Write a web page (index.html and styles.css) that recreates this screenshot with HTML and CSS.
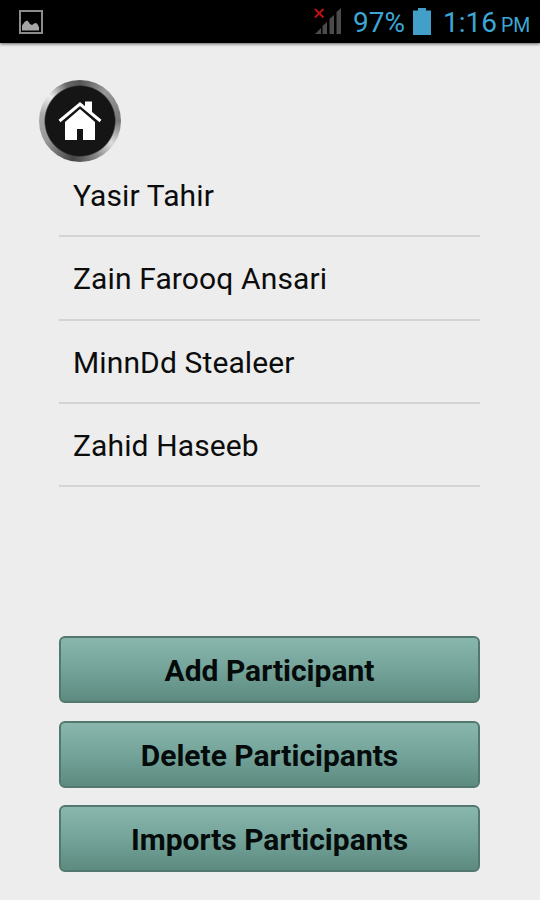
FILE: index.html
```html
<!DOCTYPE html>
<html lang="en">
<head>
    <meta charset="UTF-8">
    <meta name="viewport" content="width=device-width, initial-scale=1.0">
    <title>Participants</title>
    <link rel="stylesheet" href="styles.css">
</head>
<body>
    <div class="screen">
        <div class="status-bar">
            <svg class="icon-picture" width="24" height="25" viewBox="0 0 24 25">
                <rect x="1" y="1" width="22" height="22" fill="none" stroke="#8c8c8c" stroke-width="2"/>
                <path d="M3 20.500V15.500l3-4 2.500-1 2.500 3.500 2 1 3-2 2 .5 2 3.500v3.500z" fill="#a5a5a5"/>
            </svg>
            <svg class="icon-signal" width="29" height="28" viewBox="0 0 29 28">
                <path d="M1 27l6-6v6zM8.500 27v-8l4.500-4v12zM15.500 27V12l4.500-4v19zM22.500 27V5l4.500-4v26z" fill="#4b4b4b"/>
                <path d="M1 2l8.500 8.500M9.500 2L1 10.500" stroke="#c01010" stroke-width="2"/>
            </svg>
            <span class="battery-text">97%</span>
            <svg class="icon-battery" width="18" height="27" viewBox="0 0 18 27">
                <path d="M5 0h8v2.500h5V27H0V2.500h5z" fill="#429fc8"/>
            </svg>
            <span class="clock">1:16</span>
            <span class="clock-pm">PM</span>
        </div>

        <a class="home" href="#" aria-label="Home">
            <svg width="44" height="41" viewBox="0 0 44 41">
                <path d="M7 21L22 8l15 13v18H25V28h-6v11H7z" fill="#fff"/>
                <path d="M1.500 22L22 4.500 42.500 22" fill="none" stroke="#151515" stroke-width="4"/>
                <path d="M27 .5h7V14l-7-6z" fill="#fff"/>
                <path d="M1.500 20L22 3 42.500 20" fill="none" stroke="#fff" stroke-width="3"/>
            </svg>
        </a>

        <ul class="list">
            <li>Yasir Tahir</li>
            <li>Zain Farooq Ansari</li>
            <li>MinnDd Stealeer</li>
            <li>Zahid Haseeb</li>
        </ul>

        <div class="buttons">
            <button type="button">Add Participant</button>
            <button type="button">Delete Participants</button>
            <button type="button">Imports Participants</button>
        </div>
    </div>
</body>
</html>
```
FILE: styles.css
```css
* {
    box-sizing: border-box;
}

body {
    margin: 0;
    font-family: Roboto, "Liberation Sans", sans-serif;
    color: #0c0c0c;
}

.screen {
    display: flex;
    flex-direction: column;
    height: 900px;
    padding-bottom: 28px;
    background-color: #ededed;
}

.status-bar {
    display: flex;
    align-items: flex-start;
    flex-shrink: 0;
    height: 43px;
    padding-left: 19px;
    background-color: #000;
    box-shadow: 0 1px 3px rgba(0, 0, 0, 0.6);
    color: #3ca7d6;
    white-space: nowrap;
}

.icon-picture {
    margin-top: 10px;
}

.icon-signal {
    margin: 7px 0 0 271px;
}

.battery-text,
.clock {
    font-size: 28px;
    line-height: 33px;
    margin-top: 6px;
}

.battery-text {
    width: 58px;
    margin-left: 10px;
}

.icon-battery {
    margin: 8px 0 0 2px;
}

.clock {
    width: 54px;
    margin-left: 12px;
}

.clock-pm {
    margin: 14px 0 0 4px;
    font-size: 19.5px;
    line-height: 23px;
}

.home {
    display: flex;
    justify-content: center;
    align-items: center;
    flex-shrink: 0;
    width: 82px;
    height: 82px;
    margin: 37px 0 0 39px;
    border: 5px solid transparent;
    border-radius: 50%;
    background: radial-gradient(circle, #151515 34.5px, transparent 36px) border-box,
        conic-gradient(#555, #999 40deg, #777 90deg, #ddd 125deg, #888 155deg, #444 190deg, #999 240deg, #aaa 280deg, #eee 310deg, #666 340deg, #555) border-box;
}

.list {
    flex: 1;
    margin: -8px 60px 0 59px;
    padding: 0;
    list-style: none;
}

.list li {
    height: 83.3px;
    padding-left: 14px;
    border-bottom: 2px solid #d4d4d4;
    font-size: 30px;
    line-height: 84px;
    letter-spacing: 0.12px;
    white-space: nowrap;
}

.buttons {
    display: flex;
    flex-direction: column;
    gap: 17.5px;
    margin: 0 60px 0 59px;
}

.buttons button {
    height: 67px;
    padding: 2px 0 0;
    border: 2px solid #53796f;
    border-radius: 6px;
    background: linear-gradient(#8ab8ae, #74a39a 50%, #5b897d) border-box;
    color: #050b0a;
    font-family: inherit;
    font-size: 30px;
    font-weight: bold;
}
```
